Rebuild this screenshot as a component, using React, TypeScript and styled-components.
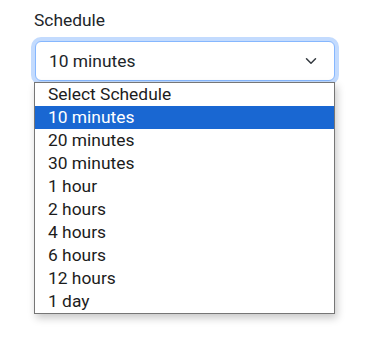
import React, { useState } from 'react';
import styled, { createGlobalStyle } from 'styled-components';

const GlobalStyle = createGlobalStyle`
  html, body {
    margin: 0;
    padding: 0;
    background: #ffffff;
  }
  body {
    font-family: Roboto, "Liberation Sans", Arial, sans-serif;
    color: #212529;
  }
`;

const Page = styled.div`
  padding: 8px 0 24px 34px;
  width: 301px;
`;

const Label = styled.div`
  font-size: 17.4px;
  line-height: 24px;
  margin-bottom: 9px;
  color: #212529;
`;

const SelectBox = styled.div`
  box-sizing: border-box;
  height: 40px;
  margin-left: 1px;
  display: flex;
  align-items: center;
  justify-content: space-between;
  padding: 0 13px 0 13px;
  border: 1px solid #86b7fe;
  border-radius: 6px;
  box-shadow: 0 0 0 4px #c3dbfe;
  background: #ffffff;
  font-size: 17.4px;
  color: #212529;
`;

const Chevron = styled.svg`
  width: 12px;
  height: 12px;
  margin-right: 4px;
`;

const Dropdown = styled.div`
  position: relative;
  margin-top: 1px;
  box-sizing: border-box;
  border: 1px solid #767676;
  background: #ffffff;
  box-shadow: 2px 4px 8px rgba(0, 0, 0, 0.22);
`;

const Option = styled.div<{ $active?: boolean }>`
  height: 23px;
  line-height: 23px;
  padding-left: 13px;
  font-size: 17.4px;
  color: ${p => (p.$active ? '#ffffff' : '#1c1c1c')};
  background: ${p => (p.$active ? '#1967d2' : 'transparent')};
  white-space: nowrap;
`;

const options = [
  'Select Schedule',
  '10 minutes',
  '20 minutes',
  '30 minutes',
  '1 hour',
  '2 hours',
  '4 hours',
  '6 hours',
  '12 hours',
  '1 day',
];

const App: React.FC = () => {
  const [value, setValue] = useState('10 minutes');

  return (
    <>
      <GlobalStyle />
      <Page>
        <Label>Schedule</Label>
        <SelectBox>
          <span>{value}</span>
          <Chevron viewBox="0 0 16 16">
            <path
              d="m2 5 6 6 6-6"
              fill="none"
              stroke="#343a40"
              strokeWidth="2"
              strokeLinecap="round"
              strokeLinejoin="round"
            />
          </Chevron>
        </SelectBox>
        <Dropdown>
          {options.map(o => (
            <Option key={o} $active={o === value} onClick={() => setValue(o)}>
              {o}
            </Option>
          ))}
        </Dropdown>
      </Page>
    </>
  );
};

export default App;
